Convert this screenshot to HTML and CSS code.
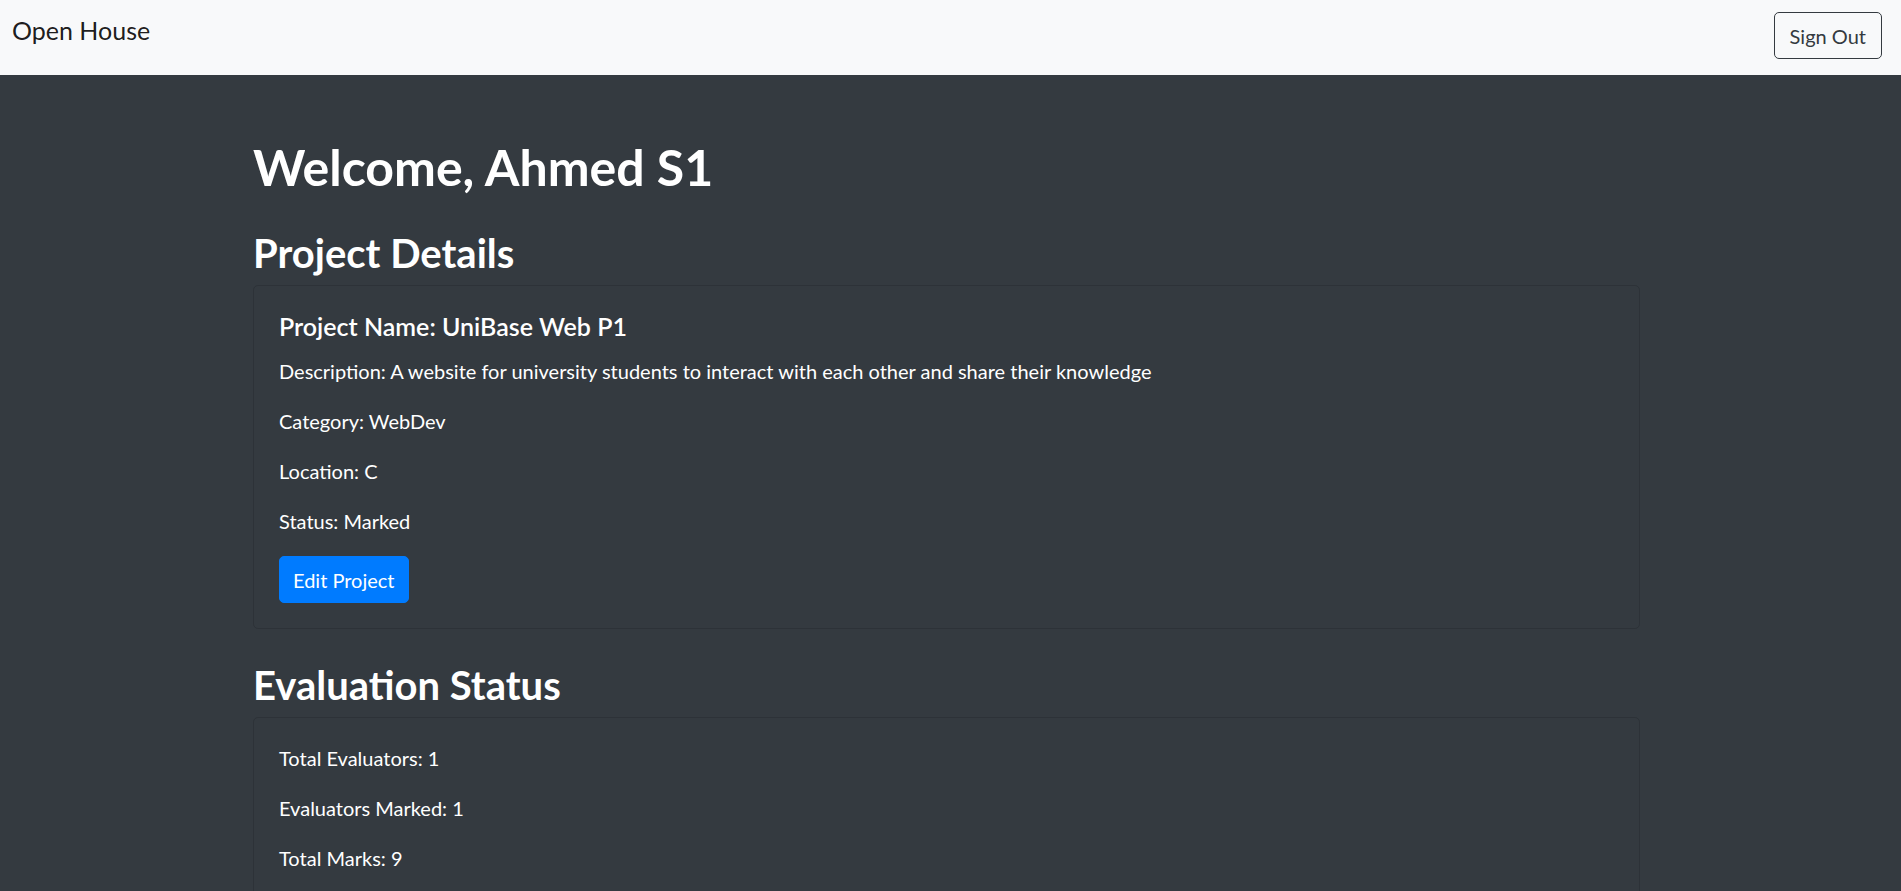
FILE: index.html
```html
<!DOCTYPE html>
<html lang="en">
<head>
<meta charset="utf-8">
<title>Open House</title>
<link rel="stylesheet" href="styles.css">
</head>
<body>
<nav class="navbar">
  <a class="brand" href="#">Open House</a>
  <button class="btn btn-outline">Sign Out</button>
</nav>
<main class="container">
  <h1 class="title">Welcome, Ahmed S1</h1>
  <h2 class="section-title">Project Details</h2>
  <div class="card">
    <h5 class="card-title">Project Name: UniBase Web P1</h5>
    <p class="card-text">Description: A website for university students to interact with each other and share their knowledge</p>
    <p class="card-text">Category: WebDev</p>
    <p class="card-text">Location: C</p>
    <p class="card-text">Status: Marked</p>
    <button class="btn btn-primary">Edit Project</button>
  </div>
  <h2 class="section-title">Evaluation Status</h2>
  <div class="card">
    <p class="card-text">Total Evaluators: 1</p>
    <p class="card-text">Evaluators Marked: 1</p>
    <p class="card-text">Total Marks: 9</p>
  </div>
</main>
</body>
</html>
```
FILE: styles.css
```css
* { box-sizing: border-box; }
html, body { margin: 0; padding: 0; }
body {
  background: #343a40;
  color: #ffffff;
  font-family: "Lato", "Open Sans", sans-serif;
  font-size: 20px;
  line-height: 30px;
  min-height: 891px;
}
.navbar {
  display: flex;
  justify-content: space-between;
  align-items: flex-start;
  height: 75px;
  padding: 12px 19px 0 12px;
  background: #f8f9fa;
}
.brand {
  font-size: 25px;
  line-height: 37px;
  color: rgba(0, 0, 0, 0.9);
  text-decoration: none;
}
.btn {
  font-family: inherit;
  font-size: 20px;
  line-height: 30px;
  padding: 7.5px 15px;
  border: 1px solid transparent;
  border-radius: 5px;
  cursor: pointer;
}
.btn-outline {
  background: transparent;
  border-color: #343a40;
  color: #343a40;
}
.btn-primary {
  padding: 7.5px 13px;
  background: #007bff;
  border-color: #007bff;
  color: #ffffff;
}
.container {
  width: 1387px;
  margin: 62px 0 0 calc(50% - 697.5px);
}
.title {
  font-size: 50px;
  line-height: 60px;
  font-weight: 700;
  margin: 0 0 30px;
}
.section-title {
  font-size: 40px;
  line-height: 48px;
  font-weight: 700;
  padding-top: 2px;
  margin: 0 0 8px;
}
.card {
  border: 1px solid rgba(0, 0, 0, 0.125);
  border-radius: 5px;
  padding: 25px;
  margin-bottom: 30px;
}
.card-title {
  font-size: 25px;
  line-height: 30px;
  font-weight: 600;
  margin: 0 0 15px;
}
.card-text {
  margin: 0 0 20px;
}
```
